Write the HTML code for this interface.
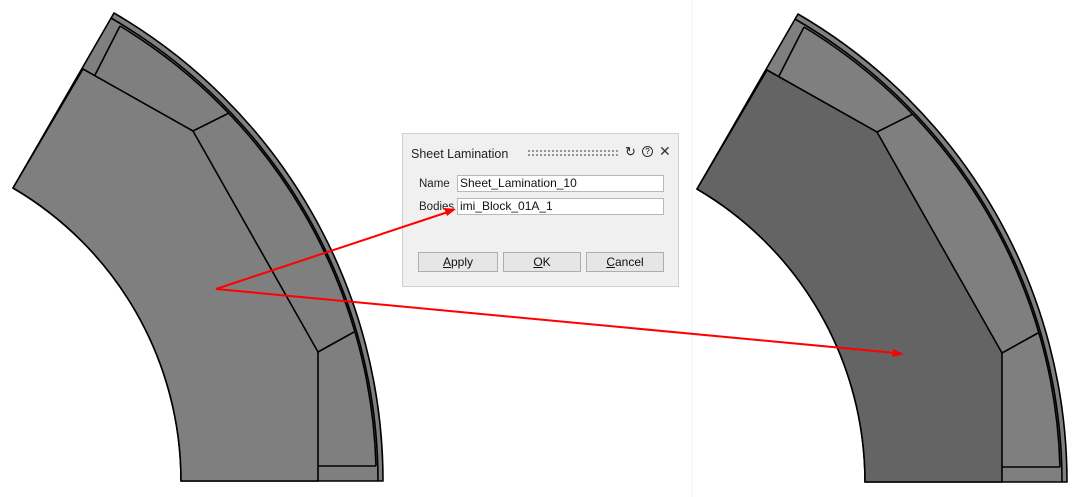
<!DOCTYPE html>
<html><head><meta charset="utf-8"><style>
html,body{margin:0;padding:0;background:#fff;width:1083px;height:497px;overflow:hidden;font-family:"Liberation Sans",sans-serif}
.dlg{position:absolute;left:402px;top:133px;width:277px;height:154px;background:#f0f0f0;border:1px solid #d0d0d0;box-sizing:border-box}
.t{position:absolute;left:8px;top:13px;font-size:12.5px;color:#222}
.lbl{position:absolute;font-size:11.5px;color:#222}
.in{position:absolute;left:54px;width:207px;height:17px;background:#fff;border:1px solid #b8b8b8;box-sizing:border-box;font-size:12px;line-height:15px;padding-left:2px;color:#111}
.btn{position:absolute;top:118px;height:20px;background:#e6e6e6;border:1px solid #adadad;box-sizing:border-box;font-size:12px;text-align:center;line-height:18px;color:#111}
</style></head><body>
<svg width="1083" height="497" style="position:absolute;left:0;top:0">
<g stroke="#000" stroke-width="1.6" stroke-linejoin="round">
<path d="M114 13 A541.6 541.6 0 0 1 383 481 L181 481 A339.6 339.6 0 0 0 13 188 Z" fill="#7f7f7f"/>
<path d="M13 188 L83 69 L193 131 L318 352 L318 481 L181 481 A339.6 339.6 0 0 0 13 188 Z" fill="#7f7f7f"/>
<g fill="none">
<path d="M111 18 A536 536 0 0 1 378 481"/>
<path d="M120 26 A532 532 0 0 1 376 466"/>
<path d="M95 75 L120 26"/>
<path d="M193 131 L229 113"/>
<path d="M318 352 L354 332"/>
<path d="M318 466 L376 466"/>
</g>
</g>
<g transform="translate(684,1)" stroke="#000" stroke-width="1.6" stroke-linejoin="round">
<path d="M114 13 A541.6 541.6 0 0 1 383 481 L181 481 A339.6 339.6 0 0 0 13 188 Z" fill="#7f7f7f"/>
<path d="M13 188 L83 69 L193 131 L318 352 L318 481 L181 481 A339.6 339.6 0 0 0 13 188 Z" fill="#646464"/>
<g fill="none">
<path d="M111 18 A536 536 0 0 1 378 481"/>
<path d="M120 26 A532 532 0 0 1 376 466"/>
<path d="M95 75 L120 26"/>
<path d="M193 131 L229 113"/>
<path d="M318 352 L354 332"/>
<path d="M318 466 L376 466"/>
</g>
</g>
<line x1="692" y1="0" x2="692" y2="497" stroke="#f2f2f2"/>
</svg>
<div class="dlg">
<div class="t">Sheet Lamination</div>
<div style="position:absolute;left:124px;top:15px;width:92px;height:9px;background-image:radial-gradient(circle,#777 0.8px,transparent 1px);background-size:4px 4px"></div>
<div style="position:absolute;left:222px;top:10px;font-size:13px;color:#222">↻</div>
<div style="position:absolute;left:239px;top:12px;width:9px;height:9px;border:1px solid #333;border-radius:50%;font-size:8px;line-height:9px;text-align:center">?</div>
<div style="position:absolute;left:256px;top:9px;font-size:14px;color:#333">✕</div>
<div class="lbl" style="left:16px;top:44px">Name</div>
<div class="in" style="top:41px">Sheet_Lamination_10</div>
<div class="lbl" style="left:16px;top:67px">Bodies</div>
<div class="in" style="top:64px">imi_Block_01A_1</div>
<div class="btn" style="left:15px;width:80px"><u>A</u>pply</div>
<div class="btn" style="left:100px;width:78px"><u>O</u>K</div>
<div class="btn" style="left:183px;width:78px"><u>C</u>ancel</div>
</div>
<svg width="1083" height="497" style="position:absolute;left:0;top:0">
<g stroke="#f00" stroke-width="2" fill="none">
<path d="M448 212 L216 289 L896 353"/>
</g>
<polygon points="456,209 444,208 447,216" fill="#f00"/>
<polygon points="904,354 893,349 892,357" fill="#f00"/>
</svg>
</body></html>
